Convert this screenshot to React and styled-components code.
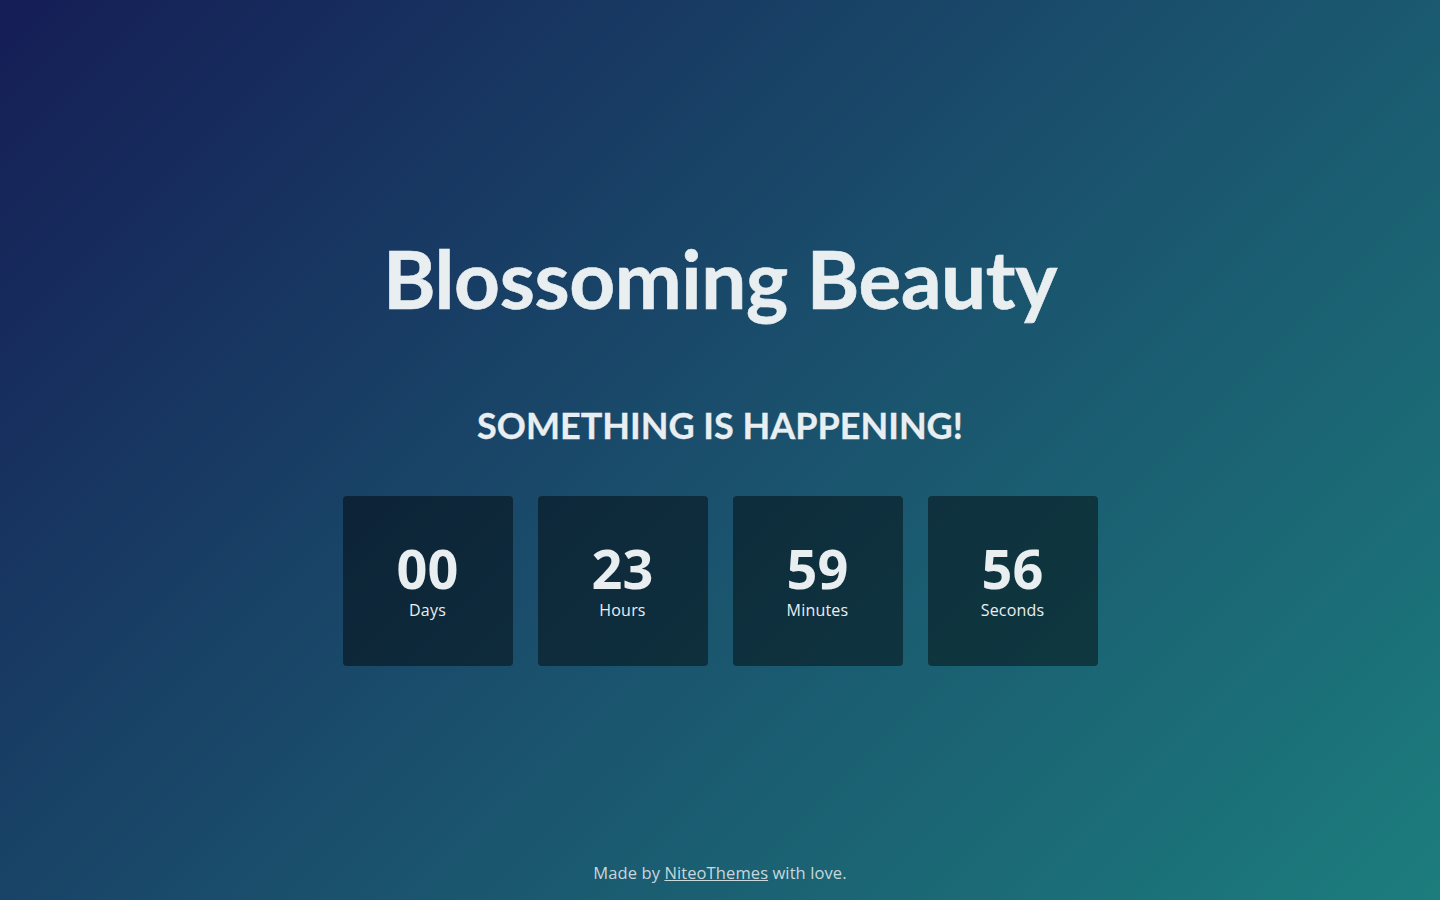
import React from "react";
import styled, { createGlobalStyle } from "styled-components";

const Global = createGlobalStyle`
  html, body { margin: 0; padding: 0; }
  body {
    font-family: "Open Sans", "Noto Sans", sans-serif;
    color: #e9eef1;
  }
`;

const Page = styled.div`
  width: 100%;
  height: 100vh;
  display: flex;
  flex-direction: column;
  align-items: center;
  background: linear-gradient(135deg, #151d56 0%, #1a4f6c 50%, #1c7d7d 100%);
  box-sizing: border-box;
`;

const Main = styled.main`
  flex: 1;
  display: flex;
  flex-direction: column;
  align-items: center;
  padding-top: 230px;
`;

const Title = styled.h1`
  margin: 0;
  font-family: "Lato", sans-serif;
  font-weight: 700;
  font-size: 80px;
  line-height: 96px;
  letter-spacing: -0.4px;
  color: #e9eef1;
  -webkit-text-stroke: 0.6px #e9eef1;
`;

const Subtitle = styled.h2`
  margin: 73px 0 0;
  font-family: "Lato", sans-serif;
  font-weight: 700;
  font-size: 36px;
  line-height: 53px;
  letter-spacing: 0;
  color: #e9eef1;
  -webkit-text-stroke: 0.3px #e9eef1;
`;

const Counter = styled.div`
  margin-top: 44px;
  display: flex;
  gap: 25px;
`;

const Box = styled.div`
  width: 170px;
  height: 170px;
  border-radius: 4px;
  background: rgba(0, 0, 0, 0.45);
  display: flex;
  flex-direction: column;
  align-items: center;
  justify-content: center;
`;

const Num = styled.div`
  font-family: "Open Sans", sans-serif;
  font-weight: 700;
  font-size: 54px;
  line-height: 54px;
`;

const Label = styled.div`
  font-family: "Open Sans", sans-serif;
  font-size: 16px;
  line-height: 22px;
  margin-top: 4px;
  letter-spacing: 0.2px;
`;

const Footer = styled.footer`
  padding-bottom: 15px;
  font-family: "Open Sans", sans-serif;
  font-size: 16.5px;
  line-height: 24px;
  letter-spacing: 0.1px;
  color: rgba(233, 238, 241, 0.85);
`;

const Link = styled.a`
  color: inherit;
  text-decoration: underline;
`;

const items = [
  ["00", "Days"],
  ["23", "Hours"],
  ["59", "Minutes"],
  ["56", "Seconds"],
];

export default function App() {
  return (
    <>
      <Global />
      <Page>
        <Main>
          <Title>Blossoming Beauty</Title>
          <Subtitle>SOMETHING IS HAPPENING!</Subtitle>
          <Counter>
            {items.map(([n, l]) => (
              <Box key={l}>
                <Num>{n}</Num>
                <Label>{l}</Label>
              </Box>
            ))}
          </Counter>
        </Main>
        <Footer>
          Made by <Link href="#">NiteoThemes</Link> with love.
        </Footer>
      </Page>
    </>
  );
}
